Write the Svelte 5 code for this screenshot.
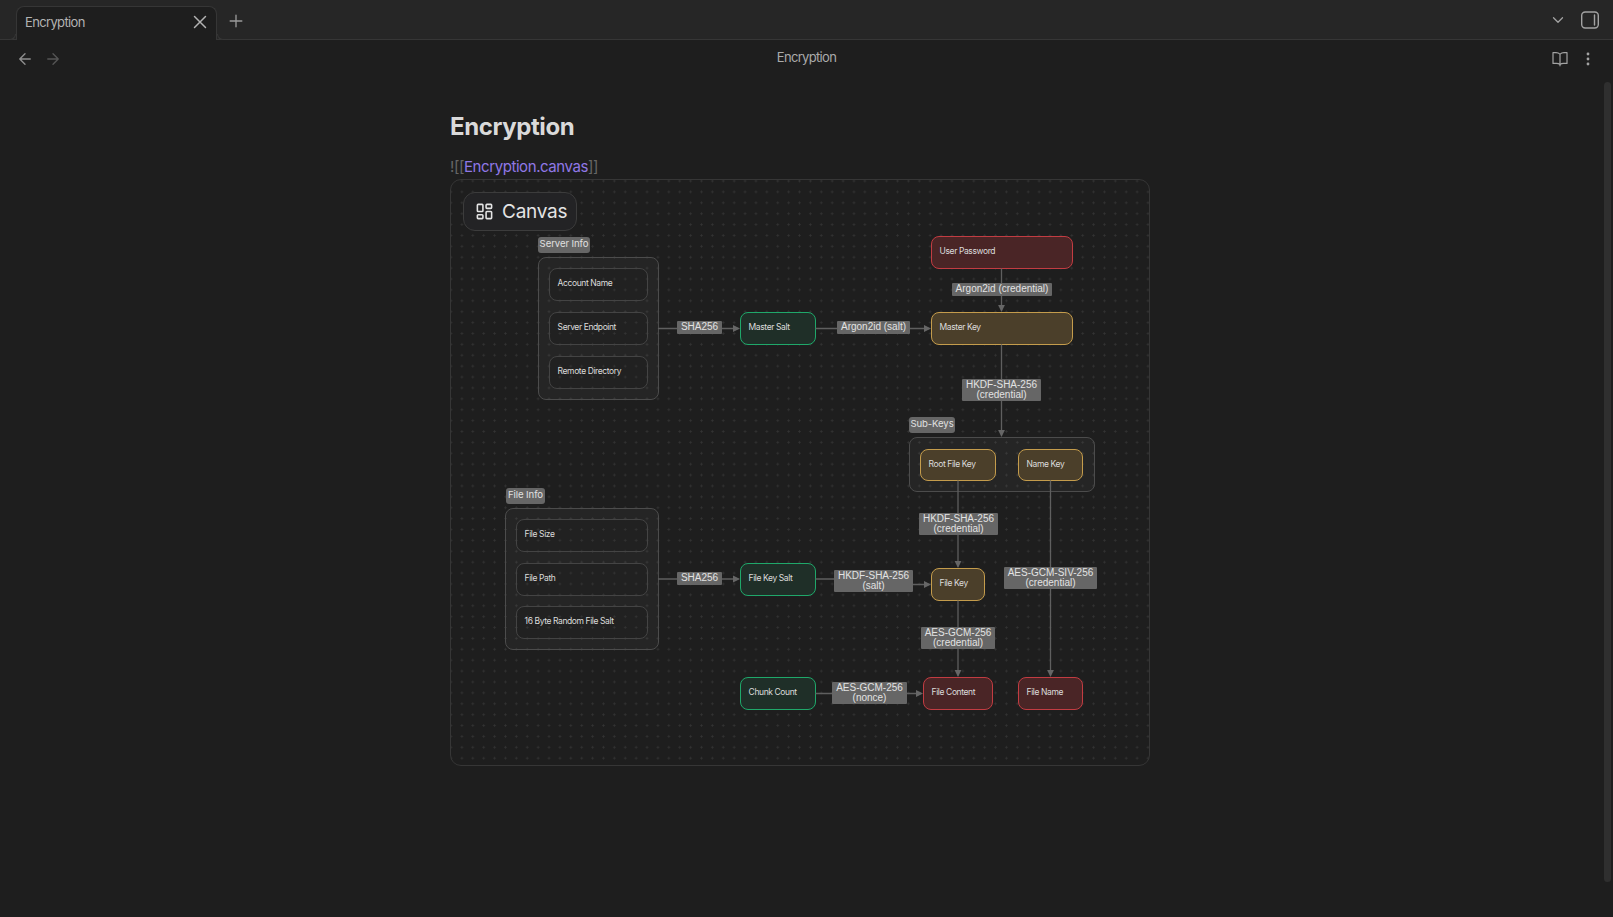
<script>
    // page coordinates of the canvas padding box
    const ox = 451
    const oy = 180

    const boxes = [
        { cls: 'group', x: 538, y: 257, w: 121, h: 143 },
        { cls: 'group', x: 505, y: 508, w: 154, h: 142 },
        { cls: 'group', x: 909, y: 437, w: 186, h: 55 },
        { cls: 'plain', x: 549, y: 268, w: 99, h: 33, text: 'Account Name' },
        { cls: 'plain', x: 549, y: 312, w: 99, h: 33, text: 'Server Endpoint' },
        { cls: 'plain', x: 549, y: 356, w: 99, h: 33, text: 'Remote Directory' },
        { cls: 'plain', x: 516, y: 519, w: 132, h: 33, text: 'File Size' },
        { cls: 'plain', x: 516, y: 563, w: 132, h: 33, text: 'File Path' },
        { cls: 'plain', x: 516, y: 606, w: 132, h: 33, text: '16 Byte Random File Salt' },
        { cls: 'green', x: 740, y: 312, w: 76, h: 33, text: 'Master Salt' },
        { cls: 'green', x: 740, y: 563, w: 76, h: 33, text: 'File Key Salt' },
        { cls: 'green', x: 740, y: 677, w: 76, h: 33, text: 'Chunk Count' },
        { cls: 'red', x: 931, y: 236, w: 142, h: 33, text: 'User Password' },
        { cls: 'red', x: 923, y: 677, w: 70, h: 33, text: 'File Content' },
        { cls: 'red', x: 1018, y: 677, w: 65, h: 33, text: 'File Name' },
        { cls: 'yellow', x: 931, y: 312, w: 142, h: 33, text: 'Master Key' },
        { cls: 'yellow', x: 920, y: 449, w: 76, h: 32, text: 'Root File Key' },
        { cls: 'yellow', x: 1018, y: 449, w: 65, h: 32, text: 'Name Key' },
        { cls: 'yellow', x: 931, y: 568, w: 54, h: 33, text: 'File Key' },
    ]

    const tags = [
        { x: 538, y: 237, w: 52, h: 16, text: 'Server Info' },
        { x: 506, y: 488, w: 39, h: 16, text: 'File Info' },
        { x: 909, y: 417, w: 46, h: 16, text: 'Sub-Keys' },
    ]

    const labels = [
        { x: 677, y: 321, w: 45, h: 13, lines: ['SHA256'] },
        { x: 677, y: 572, w: 45, h: 13, lines: ['SHA256'] },
        { x: 837, y: 321, w: 73, h: 13, lines: ['Argon2id (salt)'] },
        { x: 952, y: 283, w: 100, h: 13, lines: ['Argon2id (credential)'] },
        { x: 962, y: 379, w: 79, h: 22, lines: ['HKDF-SHA-256', '(credential)'] },
        { x: 919, y: 513, w: 79, h: 22, lines: ['HKDF-SHA-256', '(credential)'] },
        { x: 834, y: 570, w: 79, h: 22, lines: ['HKDF-SHA-256', '(salt)'] },
        { x: 1004, y: 567, w: 93, h: 22, lines: ['AES-GCM-SIV-256', '(credential)'] },
        { x: 921, y: 627, w: 74, h: 22, lines: ['AES-GCM-256', '(credential)'] },
        { x: 832, y: 682, w: 75, h: 22, lines: ['AES-GCM-256', '(nonce)'] },
    ]

    const edges = [
        'M658.5 328.5H738',
        'M816 328.5H929',
        'M1001.5 269V310',
        'M1001.5 345V435',
        'M958 481V566',
        'M1050.5 481V675',
        'M658.5 579H738',
        'M816 579H834C850 579 850 584.5 870 584.5H929',
        'M958 601V675',
        'M816 693.5H921',
    ]

    const place = (b) => `left:${b.x - ox}px;top:${b.y - oy}px;width:${b.w}px;height:${b.h}px`
</script>

<div class="window">
    <header class="tabbar">
        <div class="tab">
            <span>Encryption</span>
            <svg class="close" width="22" height="22" viewBox="0 0 24 24"><path d="M18 6 6 18M6 6l12 12" /></svg>
        </div>
        <svg class="plus" width="20" height="20" viewBox="0 0 24 24"><path d="M5 12h14M12 5v14" /></svg>
        <div class="tabbar-right">
            <svg class="chevron" width="18" height="18" viewBox="0 0 24 24"><path d="m6 9 6 6 6-6" /></svg>
            <svg class="sidebar" width="20" height="18" viewBox="0 0 20 18">
                <rect x="1.7" y="1" width="16.6" height="16" rx="3.5" />
                <path d="M14.5 4v10" />
            </svg>
        </div>
    </header>

    <nav class="navbar">
        <div class="nav-left">
            <svg width="18" height="18" viewBox="0 0 24 24"><path d="m12 19-7-7 7-7M19 12H5" /></svg>
            <svg class="off" width="18" height="18" viewBox="0 0 24 24"><path d="M5 12h14M12 5l7 7-7 7" /></svg>
        </div>
        <div class="nav-title">Encryption</div>
        <div class="nav-right">
            <svg width="16" height="16" viewBox="0 0 16 16">
                <path d="M8 3.2C7 2.2 5.8 1.6 4 1.6H1v10.8h3.5c1.6 0 2.6.4 3.5 1.3.9-.9 1.9-1.3 3.5-1.3H15V1.6h-3c-1.8 0-3 .6-4 1.6ZM8 3.2v11.6" />
            </svg>
            <svg class="dots" width="4" height="14" viewBox="0 0 4 14">
                <circle cx="2" cy="2" r="1.4" /><circle cx="2" cy="7" r="1.4" /><circle cx="2" cy="12" r="1.4" />
            </svg>
        </div>
    </nav>

    <main class="view">
        <article class="note">
            <h1>Encryption</h1>
            <p class="source"><span class="fmt">![[</span><span class="link">Encryption.canvas</span><span class="fmt">]]</span></p>

            <section class="canvas">
                <svg class="edges" width="698" height="586" viewBox="{ox} {oy} 698 586">
                    <defs>
                        <marker id="tip" markerUnits="userSpaceOnUse" markerWidth="8" markerHeight="8" refX="5" refY="4" orient="auto">
                            <path d="M0 .6 7 4 0 7.4Z" class="tip" />
                        </marker>
                    </defs>
                    {#each edges as d}
                        <path {d} class="edge" marker-end="url(#tip)" />
                    {/each}
                </svg>

                {#each boxes as b}
                    <div class="box {b.cls}" style={place(b)}>{b.text ?? ''}</div>
                {/each}

                {#each tags as t}
                    <div class="tag" style={place(t)}>{t.text}</div>
                {/each}

                {#each labels as l}
                    <div class="label" style={place(l)}>
                        {#each l.lines as line}<span>{line}</span>{/each}
                    </div>
                {/each}

                <div class="badge">
                    <svg width="19" height="19" viewBox="0 0 24 24">
                        <rect x="3" y="3" width="7" height="9" rx="1" />
                        <rect x="14" y="3" width="7" height="5" rx="1" />
                        <rect x="14" y="12" width="7" height="9" rx="1" />
                        <rect x="3" y="16" width="7" height="5" rx="1" />
                    </svg>
                    <span>Canvas</span>
                </div>
            </section>
        </article>
        <div class="scrollbar"></div>
    </main>
</div>

<style>
    :global(body) {
        margin: 0;
        background: #1e1e1e;
        overflow: hidden;
    }

    .window {
        height: 917px;
        display: flex;
        flex-direction: column;
        font-family: Inter, "Liberation Sans", sans-serif;
        color: #dadada;
    }

    svg {
        fill: none;
        stroke: currentColor;
        stroke-width: 2;
        stroke-linecap: round;
        stroke-linejoin: round;
        flex: none;
    }

    .tabbar {
        height: 40px;
        box-sizing: border-box;
        flex: none;
        display: flex;
        align-items: flex-end;
        padding-left: 16px;
        background: #262626;
        border-bottom: 1px solid #363636;
    }

    .tab {
        position: relative;
        width: 201px;
        height: 34px;
        box-sizing: border-box;
        margin-bottom: -1px;
        padding: 0 5px 3px 8px;
        display: flex;
        align-items: center;
        justify-content: space-between;
        background: #1e1e1e;
        border: 1px solid #363636;
        border-bottom: none;
        border-radius: 8px 8px 0 0;
        font-size: 13px;
        letter-spacing: -0.65px;
        color: #b3b3b3;
    }

    /* little flares where the tab meets the bar */
    .tab::before,
    .tab::after {
        content: '';
        position: absolute;
        bottom: 0;
        width: 6px;
        height: 6px;
        box-sizing: border-box;
        background: #262626;
        border-bottom: 1px solid #363636;
    }

    .tab::before {
        left: -7px;
        border-right: 1px solid #363636;
        border-bottom-right-radius: 6px;
    }

    .tab::after {
        right: -7px;
        border-left: 1px solid #363636;
        border-bottom-left-radius: 6px;
    }

    .close {
        color: #b3b3b3;
        stroke-width: 1.6;
    }

    .plus {
        margin: 0 0 8px 9px;
        color: #9a9a9a;
        stroke-width: 1.6;
    }

    .tabbar-right {
        margin-left: auto;
        display: flex;
        align-items: center;
        gap: 13px;
        padding: 0 13px 10px 0;
        color: #a3a3a3;
    }

    .chevron {
        stroke-width: 1.7;
    }

    .sidebar {
        stroke-width: 1.4;
    }

    .navbar {
        height: 39px;
        box-sizing: border-box;
        flex: none;
        position: relative;
        display: flex;
        align-items: center;
        justify-content: space-between;
        padding: 0 23px 1px 16px;
        color: #8f8f8f;
    }

    .nav-left {
        display: flex;
        gap: 10px;
    }

    .nav-left svg {
        stroke-width: 1.8;
    }

    .nav-left .off {
        color: #555;
    }

    .nav-title {
        position: absolute;
        left: 0;
        right: 0;
        top: 9px;
        text-align: center;
        font-size: 13px;
        letter-spacing: -0.68px;
        color: #ababab;
    }

    .nav-right {
        display: flex;
        align-items: center;
        gap: 18px;
        color: #a3a3a3;
    }

    .nav-right svg {
        stroke-width: 1.2;
    }

    .dots {
        fill: currentColor;
        stroke: none;
    }

    .view {
        flex: 1;
        position: relative;
        padding-right: 13px;
    }

    .scrollbar {
        position: absolute;
        right: 2px;
        top: 3px;
        width: 7px;
        height: 800px;
        border-radius: 4px;
        background: #2f2f2f;
    }

    .note {
        width: 700px;
        margin: 0 auto;
    }

    h1 {
        margin: 0;
        padding-top: 31px;
        font-size: 24px;
        line-height: 34px;
        font-weight: 700;
        letter-spacing: -0.4px;
        color: #dadada;
    }

    .source {
        margin: 12px 0 0;
        font-size: 15px;
        line-height: 22px;
        letter-spacing: -0.42px;
    }

    .fmt {
        color: #666;
    }

    .link {
        color: #9078e6;
    }

    .canvas {
        position: relative;
        height: 587px;
        box-sizing: border-box;
        margin-top: 1px;
        border: 1px solid #363636;
        border-radius: 11px;
        overflow: hidden;
        background-color: #1e1e1e;
        background-image: radial-gradient(circle, #333 0.9px, transparent 1.2px);
        background-size: 10.9px 10.9px;
        background-position: -5.45px -4.45px;
    }

    .edges {
        position: absolute;
        left: 0;
        top: 0;
        z-index: 1;
    }

    .edge {
        stroke: #5f5f5f;
        stroke-width: 1.3;
        fill: none;
    }

    .tip {
        fill: #666;
        stroke: none;
    }

    .box {
        position: absolute;
        box-sizing: border-box;
        display: flex;
        align-items: center;
        padding: 0 7.6px 3px;
        border: 1px solid #4a4a4a;
        border-radius: 8px;
        font-size: 8.5px;
        letter-spacing: -0.4px;
        color: #dcdcdc;
    }

    .group {
        background: rgba(255, 255, 255, 0.035);
        border-color: #4c4c4c;
    }

    .plain {
        background: rgba(0, 0, 0, 0.1);
        border-color: #444;
    }

    .green {
        background: #1f2f28;
        border-color: #1fa86a;
    }

    .red {
        background: #4a2526;
        border-color: #c23c42;
    }

    .yellow {
        background: #4b3f2a;
        border-color: #c49c4c;
    }

    .tag {
        position: absolute;
        z-index: 2;
        box-sizing: border-box;
        display: flex;
        align-items: center;
        justify-content: center;
        padding-bottom: 3px;
        background: #666;
        border-radius: 3px;
        font-size: 9.6px;
        letter-spacing: -0.1px;
        color: #e0e0e0;
    }

    .label {
        position: absolute;
        z-index: 2;
        box-sizing: border-box;
        display: flex;
        flex-direction: column;
        align-items: center;
        justify-content: center;
        padding-bottom: 1px;
        background: #666;
        border-radius: 1px;
        font-family: "Liberation Sans", Arial, sans-serif;
        font-size: 10px;
        line-height: 9.2px;
        color: #e2e2e2;
        white-space: nowrap;
    }

    .badge {
        position: absolute;
        z-index: 3;
        left: 12px;
        top: 12px;
        width: 114px;
        height: 39px;
        box-sizing: border-box;
        display: flex;
        align-items: center;
        gap: 8px;
        padding-left: 11px;
        background: #232325;
        border: 1px solid #3c3c3c;
        border-radius: 12px;
        font-size: 19px;
        letter-spacing: -0.25px;
        color: #e4e4e4;
    }
</style>
